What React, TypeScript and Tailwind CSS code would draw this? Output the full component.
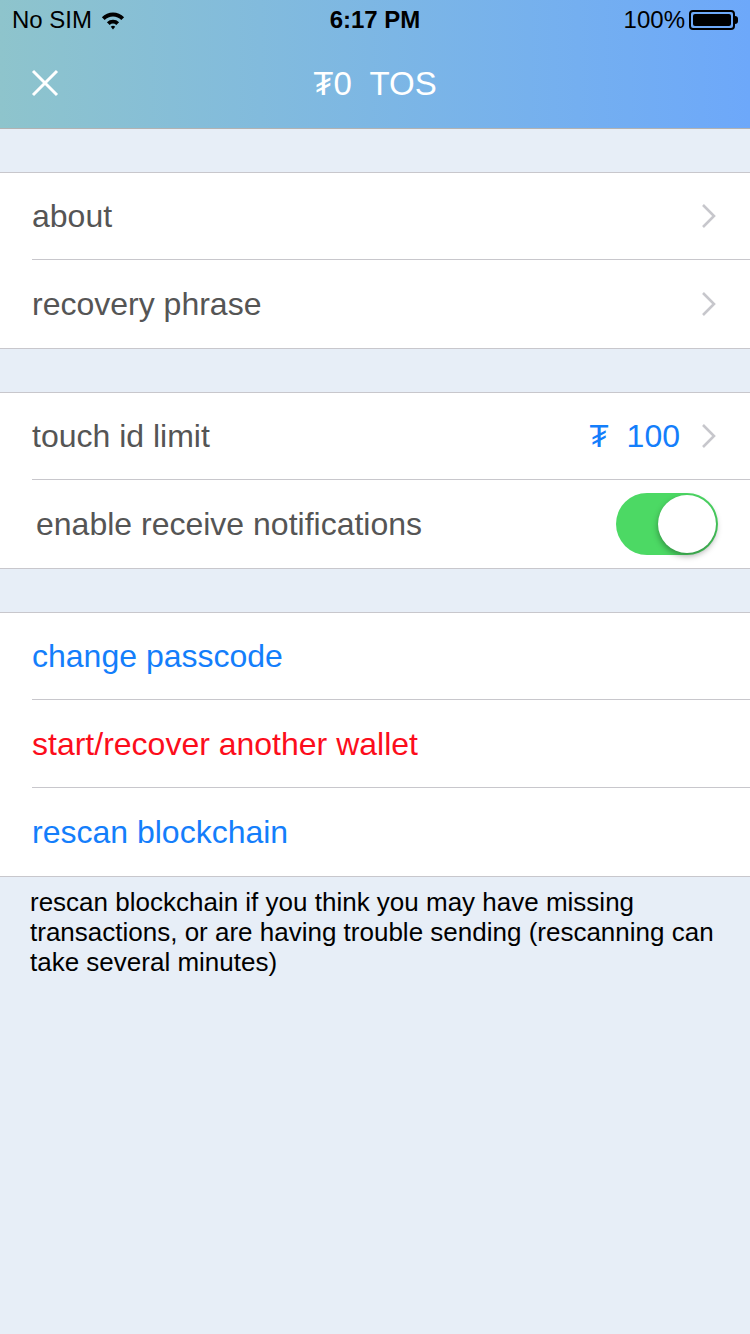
import React from "react";

const font = { fontFamily: '"Liberation Sans", Arial, sans-serif' };

const Chevron = () => (
  <svg width="18" height="28" viewBox="0 0 18 28" className="shrink-0">
    <path d="M3 3 L14 14 L3 25" fill="none" stroke="#c7c7cc" strokeWidth="2.6" />
  </svg>
);

const Row: React.FC<{ children: React.ReactNode; first?: boolean; last?: boolean }> = ({
  children,
  first,
  last,
}) => (
  <div className="pl-8">
    <div
      className={
        "flex items-center pr-8 " +
        (first ? "h-[87px] " : "h-[88px] ") +
        (last ? "" : "border-b border-[#c8c7cc]")
      }
    >
      {children}
    </div>
  </div>
);

const Section: React.FC<{ children: React.ReactNode }> = ({ children }) => (
  <div className="mt-[43px] border-y border-[#c8c7cc] bg-white">{children}</div>
);

export default function App() {
  return (
    <div className="flex min-h-[1334px] w-[750px] flex-col bg-[#e7eef7]" style={font}>
      <div className="border-b border-[#b2b2b2] bg-gradient-to-r from-[#8ec4cc] to-[#6da8fa]">
        <div className="relative flex h-10 items-center justify-between px-3 text-[24px] text-black">
          <div className="flex items-center gap-2">
            <span>No SIM</span>
            <svg width="26" height="20" viewBox="0 0 22 18">
              <path d="M1 6.5 A14 14 0 0 1 21 6.5 L18.5 9 A10.5 10.5 0 0 0 3.5 9 Z" fill="black" />
              <path d="M5.5 11 A8 8 0 0 1 16.5 11 L14 13.5 A4.5 4.5 0 0 0 8 13.5 Z" fill="black" />
              <path d="M9 15 A3 3 0 0 1 13 15 L11 17.5 Z" fill="black" />
            </svg>
          </div>
          <span className="absolute left-1/2 -translate-x-1/2 font-bold">6:17 PM</span>
          <div className="flex items-center gap-1">
            <span>100%</span>
            <div className="flex items-center">
              <div className="h-[20px] w-[46px] rounded-[4px] border-2 border-black p-[2px]">
                <div className="h-full w-full rounded-[2px] bg-black" />
              </div>
              <div className="h-[8px] w-[3px] rounded-r-sm bg-black" />
            </div>
          </div>
        </div>
        <div className="relative flex h-[88px] items-center justify-center">
          <svg width="28" height="28" viewBox="0 0 28 28" className="absolute left-[31px] top-[29px]">
            <path d="M2 2 L26 26 M26 2 L2 26" stroke="white" strokeWidth="3" />
          </svg>
          <span className="text-[33px] text-white">₮0&nbsp; TOS</span>
        </div>
      </div>

      <Section>
        <Row first>
          <span className="flex-1 text-[32px] text-[#555]">about</span>
          <Chevron />
        </Row>
        <Row last>
          <span className="flex-1 text-[32px] text-[#555]">recovery phrase</span>
          <Chevron />
        </Row>
      </Section>

      <Section>
        <Row first>
          <span className="flex-1 text-[32px] text-[#555]">touch id limit</span>
          <span className="mr-5 text-[32px] text-[#147efb]">₮&nbsp; 100</span>
          <Chevron />
        </Row>
        <Row last>
          <span className="flex-1 pl-1 text-[32px] text-[#555]">enable receive notifications</span>
          <div className="relative h-[62px] w-[102px] rounded-full bg-[#4cd964]">
            <div className="absolute right-[2px] top-[2px] h-[58px] w-[58px] rounded-full bg-white shadow-[0_3px_6px_rgba(0,0,0,0.35)]" />
          </div>
        </Row>
      </Section>

      <Section>
        <Row first>
          <span className="text-[32px] text-[#147efb]">change passcode</span>
        </Row>
        <Row>
          <span className="text-[32px] text-[#fc0d1b]">start/recover another wallet</span>
        </Row>
        <Row last>
          <span className="text-[32px] text-[#147efb]">rescan blockchain</span>
        </Row>
      </Section>

      <p className="pl-[30px] pr-[18px] pt-[10px] text-[26px] leading-[30px] text-black">
        rescan blockchain if you think you may have missing transactions, or are having trouble sending (rescanning can take several minutes)
      </p>
    </div>
  );
}
